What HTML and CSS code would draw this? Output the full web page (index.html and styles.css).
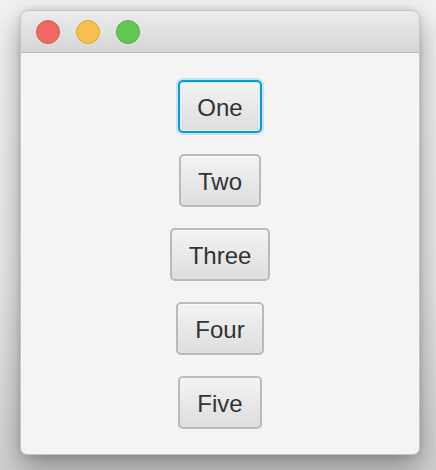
FILE: index.html
```html
<!DOCTYPE html>
<html>
<head>
<meta charset="utf-8">
<link rel="stylesheet" href="styles.css">
</head>
<body>
<div class="window">
  <div class="titlebar">
    <span class="light red"></span>
    <span class="light yellow"></span>
    <span class="light green"></span>
  </div>
  <div class="content">
    <button class="btn focused">One</button>
    <button class="btn">Two</button>
    <button class="btn">Three</button>
    <button class="btn">Four</button>
    <button class="btn">Five</button>
  </div>
</div>
</body>
</html>
```
FILE: styles.css
```css
html, body {
  margin: 0;
  padding: 0;
}
body {
  width: 436px;
  height: 470px;
  overflow: hidden;
  background: linear-gradient(to bottom, #f1f1f1 0%, #e6e6e6 60%, #cfcfcf 100%);
  font-family: "Liberation Sans", Arial, sans-serif;
}
.window {
  margin: 10px 0 0 20px;
  width: 400px;
  height: 445px;
  box-sizing: border-box;
  border-radius: 9px 9px 7px 7px;
  background: #f4f4f4;
  border: 1px solid #c4c4c4;
  box-shadow: 0 12px 28px rgba(0, 0, 0, 0.35), 0 0 6px rgba(0, 0, 0, 0.12);
  overflow: hidden;
  display: flex;
  flex-direction: column;
}
.titlebar {
  height: 42px;
  box-sizing: border-box;
  background: linear-gradient(to bottom, #ececec, #d6d6d6);
  border-bottom: 1px solid #b9b9b9;
  display: flex;
  align-items: center;
  padding: 0 0 0 15px;
  gap: 16px;
}
.light {
  width: 24px;
  height: 24px;
  box-sizing: border-box;
  border-radius: 50%;
  display: block;
}
.red { background: #ee6a5f; border: 1px solid #dc5a4f; }
.yellow { background: #f6bf50; border: 1px solid #dea73c; }
.green { background: #62c655; border: 1px solid #52ad44; }
.content {
  flex: 1;
  display: flex;
  flex-direction: column;
  align-items: center;
  padding-top: 27px;
  gap: 21px;
}
.btn {
  height: 53px;
  box-sizing: border-box;
  padding: 2px 17px 0;
  font-family: "Liberation Sans", Arial, sans-serif;
  font-size: 24px;
  color: #333333;
  background: linear-gradient(to bottom, #f3f3f3, #dedede);
  border: 2px solid #bababa;
  border-radius: 5px;
  box-shadow: inset 0 1px 0 #fafafa;
  display: flex;
  align-items: center;
  justify-content: center;
}
.btn.focused {
  border: 2px solid #0c9bd6;
  padding: 2px 17px 0;
  box-shadow: 0 0 0 2px rgba(12, 155, 214, 0.18), inset 0 0 0 1px #d9ecf5;
}
```
